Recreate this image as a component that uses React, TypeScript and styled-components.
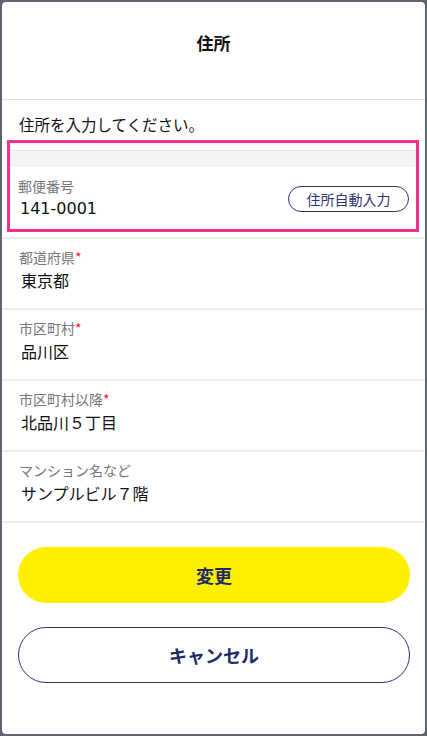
import React from "react";
import styled, { createGlobalStyle } from "styled-components";

const Global = createGlobalStyle`
  html, body { margin: 0; padding: 0; background: #5f6570; }
  body { font-family: "Noto Sans CJK JP", "Noto Sans", sans-serif; }
  * { box-sizing: border-box; }
`;

const Page = styled.div`
  padding: 2px;
  min-height: 736px;
`;

const Card = styled.div`
  background: #fff;
  border-radius: 4px;
  height: 732px;
  overflow: hidden;
  display: flex;
  flex-direction: column;
`;

const Header = styled.div`
  height: 98px;
  padding-top: 29px;
  text-align: center;
  font-size: 17px;
  line-height: 24px;
  font-weight: 700;
  color: #111;
  border-bottom: 1px solid #e2e2e2;
`;

const Intro = styled.div`
  padding: 13px 17px 5px;
  font-size: 15.5px;
  line-height: 22px;
  color: #111;
`;

const PostalSection = styled.div`
  padding-bottom: 5px;
  border-bottom: 2px solid #eeeeee;
`;

const Highlight = styled.div`
  margin: 0 6px 0 5px;
  border: 3px solid #ff2d8e;
`;

const Spacer = styled.div`
  height: 7px;
`;

const Strip = styled.div`
  height: 17px;
  background: #f4f4f6;
  border-top: 1px solid #e6e6ea;
`;

const PostalRow = styled.div`
  display: flex;
  align-items: center;
  justify-content: space-between;
  padding: 10px 7px 9px 8px;
`;

const FieldBody = styled.div`
  display: flex;
  flex-direction: column;
  gap: 3px;
`;

const Label = styled.div`
  font-size: 14px;
  line-height: 18px;
  color: #777;
`;

const Req = styled.span`
  color: #ee2222;
`;

const Value = styled.div<{ $numeric?: boolean }>`
  font-family: ${(p) =>
    p.$numeric ? '"DejaVu Sans", "Noto Sans CJK JP", sans-serif' : "inherit"};
  font-size: 16px;
  line-height: 22px;
  color: #111;
  padding-left: 2px;
`;

const AutoButton = styled.button`
  font-family: inherit;
  height: 26px;
  width: 121px;
  border: 1px solid #2e3470;
  border-radius: 13px;
  background: #fff;
  color: #2e3470;
  font-size: 14px;
  padding: 0;
  cursor: pointer;
`;

const Field = styled.div`
  padding: 9px 17px 17px;
  border-bottom: 2px solid #eeeeee;
`;

const Actions = styled.div`
  display: flex;
  flex-direction: column;
  gap: 24px;
  padding: 24px 15px 0 16px;
`;

const ActionButton = styled.button<{ $primary?: boolean }>`
  font-family: inherit;
  height: 56px;
  width: 100%;
  border-radius: 28px;
  font-size: 18px;
  font-weight: 700;
  color: #1f2a66;
  cursor: pointer;
  background: ${(p) => (p.$primary ? "#fff000" : "#fff")};
  border: ${(p) => (p.$primary ? "none" : "1.5px solid #2e3470")};
`;

const fields: { label: string; value: string; required: boolean }[] = [
  { label: "都道府県", value: "東京都", required: true },
  { label: "市区町村", value: "品川区", required: true },
  { label: "市区町村以降", value: "北品川５丁目", required: true },
  { label: "マンション名など", value: "サンプルビル７階", required: false },
];

export default function App() {
  return (
    <>
      <Global />
      <Page>
        <Card>
          <Header>住所</Header>
          <Intro>住所を入力してください。</Intro>
          <PostalSection>
            <Highlight>
              <Spacer />
              <Strip />
              <PostalRow>
                <FieldBody>
                  <Label>郵便番号</Label>
                  <Value $numeric>141-0001</Value>
                </FieldBody>
                <AutoButton>住所自動入力</AutoButton>
              </PostalRow>
            </Highlight>
          </PostalSection>
          {fields.map((f) => (
            <Field key={f.label}>
              <FieldBody>
                <Label>
                  {f.label}
                  {f.required && <Req>*</Req>}
                </Label>
                <Value>{f.value}</Value>
              </FieldBody>
            </Field>
          ))}
          <Actions>
            <ActionButton $primary>変更</ActionButton>
            <ActionButton>キャンセル</ActionButton>
          </Actions>
        </Card>
      </Page>
    </>
  );
}
